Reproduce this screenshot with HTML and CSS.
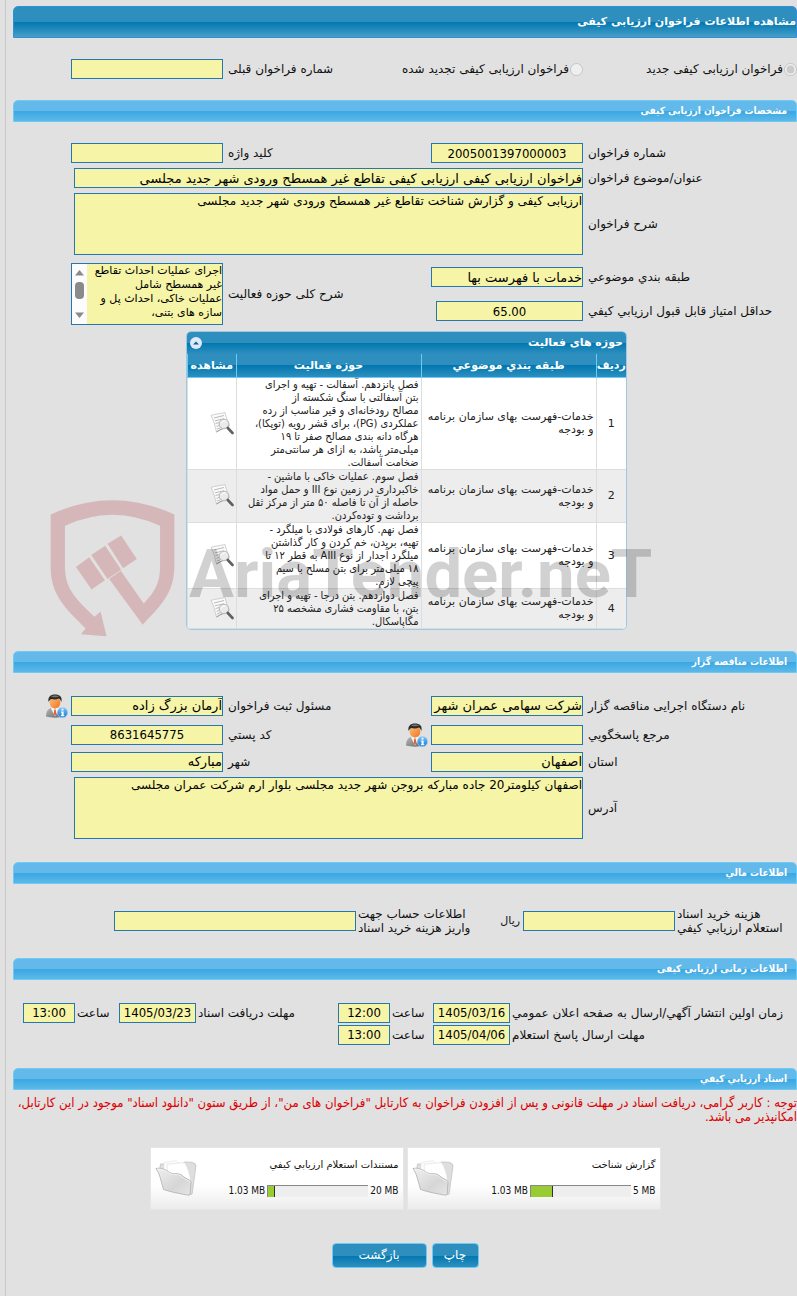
FILE: index.html
```
<!DOCTYPE html>
<html lang="fa" dir="rtl">
  <head>
    <meta charset="UTF-8" />
    <title>مشاهده اطلاعات فراخوان ارزیابی کیفی</title>
    <link rel="stylesheet" href="styles.css" />
  </head>
  <body>
    <!-- Shared icons -->
    <svg class="sprite" aria-hidden="true">
      <defs>
        <linearGradient id="gInfo" x1="0" y1="0" x2="0" y2="1">
          <stop offset="0" stop-color="#7cc6f5" />
          <stop offset="1" stop-color="#1877d4" />
        </linearGradient>
        <linearGradient id="gFace" x1="0" y1="0" x2="1" y2="1">
          <stop offset="0" stop-color="#ffc07a" />
          <stop offset="1" stop-color="#ee7422" />
        </linearGradient>
        <linearGradient id="gSuit" x1="0" y1="0" x2="1" y2="1">
          <stop offset="0" stop-color="#b9b9b9" />
          <stop offset="1" stop-color="#666" />
        </linearGradient>
        <linearGradient id="gFolder" x1="0" y1="0" x2="1" y2="1">
          <stop offset="0" stop-color="#f0f0f0" />
          <stop offset=".6" stop-color="#d6d6d6" />
          <stop offset="1" stop-color="#e6e6e6" />
        </linearGradient>
      </defs>
      <symbol id="icon-person" viewBox="0 0 22 24">
        <path d="M0 22.500c0-5 2-8 6-9h6c4 1 6 4 6 9-5 1.500-13 1.500-18 0z" fill="url(#gSuit)" />
        <path d="M6 13l3 1.500 3-1.500 1 1.500-4 8-4-8z" fill="#f5f5f5" />
        <path d="M8.300 15.500h1.400l.6 4.500-1.300 2-1.300-2z" fill="#e0603c" />
        <ellipse cx="9" cy="8.500" rx="5.400" ry="6" fill="url(#gFace)" />
        <path d="M2.600 8C1.500 3 4.500.5 9 .5s7.600 2 6.400 7.500c-.9-2-1.400-3-2.400-3.500-3 1.500-6 1-7.600.5-1.200.7-2.200 1.500-2.800 3z" fill="#2c2c2c" />
        <path d="M5 2.600c2-1.400 6-1.400 8 0-2 .8-6 .8-8 0z" fill="#777" />
        <circle cx="16.500" cy="18.500" r="5.200" fill="url(#gInfo)" stroke="#b7dcf7" stroke-width=".6" />
        <path d="M15.500 14.800h2v1.800h-2zM15 17.600h2.600v3.600h.8v1h-3.600v-1h.8v-2.600H15z" fill="#fff" />
      </symbol>
      <symbol id="icon-view" viewBox="0 0 24 23">
        <path d="M1 3.500C4 2 9 2 15 .5c1 5 3 9 4.500 13-4 2-8 3-13 6.500C5 14 4 9 1 3.500z" fill="#fafafa" stroke="#c4c4c4" stroke-width=".8" />
        <path d="M4 6l10-2.500M5 8.800l9-2M5.500 11.500l4-1M6.500 14.300l3-.8M7 17l4-1.500" stroke="#aaa" stroke-width=".8" />
        <path d="M6.500 20c4-3 9-4 12.500-6" stroke="#888" stroke-width=".8" fill="none" />
        <circle cx="14" cy="12" r="4.800" fill="#e8e8e8" fill-opacity=".9" stroke="#b8b8b8" />
        <path d="M11 11.500c.5-2 2.500-3 4.500-2.500" stroke="#fff" fill="none" />
        <path d="M17.800 16l4.700 5" stroke="#606060" stroke-width="2.600" stroke-linecap="round" />
      </symbol>
      <symbol id="icon-folder" viewBox="8 30 128 114">
        <path d="M22 60L25 44 90 46 97 38 121 39Q134 43 133 50L121 136 112 138 90 100z" fill="#dedede" stroke="#bbb" stroke-width="2" />
        <path d="M34 70L36 40 72 34 84 44 92 92 60 84z" fill="#fcfcfc" stroke="#ddd" stroke-width="1.500" />
        <path d="M46 72L45 45 98 40Q112 60 117 98L80 90z" fill="#fff" stroke="#d6d6d6" stroke-width="1.500" />
        <path d="M11 58C28 55 42 62 52 70C64 78 80 68 94 82C102 90 112 90 118 98L115 136Q114 141 107 139C82 134 56 130 34 122C26 98 24 75 11 58Z" fill="url(#gFolder)" stroke="#b0b0b0" stroke-width="2.500" />
        <path d="M14 60C30 58 42 66 53 73C66 80 80 72 92 85C100 92 110 93 116 100" fill="none" stroke="#fff" stroke-width="1.500" />
      </symbol>
    </svg>

    <main class="page">
      <h1 class="page-title">مشاهده اطلاعات فراخوان ارزیابی کیفی</h1>

      <form>
        <div class="grid type-row">
          <span class="option">
            <input type="radio" name="kind" id="kindNew" checked disabled />
            <label for="kindNew">فراخوان ارزیابی کیفی جدید</label>
          </span>
          <span class="option">
            <input type="radio" name="kind" id="kindRenewed" disabled />
            <label for="kindRenewed">فراخوان ارزیابی کیفی تجدید شده</label>
          </span>
          <label class="lbl" for="prevNo">شماره فراخوان قبلی</label>
          <input class="box" id="prevNo" type="text" readonly />
        </div>

        <h2 class="bar">مشخصات فراخوان ارزیابی کیفی</h2>
        <div class="grid fields">
          <label class="lbl" for="callNo">شماره فراخوان</label>
          <input class="box center" id="callNo" type="text" value="2005001397000003" readonly />
          <label class="lbl" for="keyword">کلید واژه</label>
          <input class="box" id="keyword" type="text" readonly />

          <label class="lbl first" for="subject">عنوان/موضوع فراخوان</label>
          <input class="box wide" id="subject" type="text" value="فراخوان ارزیابی کیفی ارزیابی کیفی تقاطع غیر همسطح ورودی شهر جدید مجلسی" readonly />

          <label class="lbl first" for="desc">شرح فراخوان</label>
          <textarea class="box wide" id="desc" readonly>ارزیابی کیفی و گزارش شناخت تقاطع غیر همسطح ورودی شهر جدید مجلسی</textarea>
        </div>
        <div class="grid category">
          <label class="lbl" for="cat">طبقه بندي موضوعي</label>
          <input class="box" id="cat" type="text" value="خدمات با فهرست بها" readonly />
          <label class="lbl scope-label" for="scope">شرح کلی حوزه فعالیت</label>
          <div class="scope">
            <textarea class="box" id="scope" readonly>اجرای عملیات احداث تقاطع
غیر همسطح شامل
عملیات خاکی، احداث پل و
سازه های بتنی،</textarea>
            <svg class="scroller" viewBox="0 0 15 60">
              <path d="M3 11.500L7.500 6l4.500 5.500zM3 48.500h9L7.500 54z" fill="#8a8a8a" />
              <rect x="3" y="18" width="9" height="17" rx="4" fill="#8a8a8a" />
            </svg>
          </div>
          <label class="lbl first" for="score">حداقل امتیاز قابل قبول ارزيابي كيفي</label>
          <input class="box center short" id="score" type="text" value="65.00" readonly />
        </div>

        <div class="activities">
          <div class="panel">
            <div class="panel-title">
              <span>حوزه های فعالیت</span>
              <button type="button" class="collapse" aria-label="بستن">
                <svg viewBox="0 0 12 12"><circle cx="6" cy="6" r="6" fill="#dfeaf8" /><path d="M3 7.500L6 4.500l3 3z" fill="#14628f" /></svg>
              </button>
            </div>
            <table>
              <thead>
                <tr>
                  <th class="c-row">ردیف</th>
                  <th class="c-cat">طبقه بندي موضوعي</th>
                  <th class="c-act">حوزه فعالیت</th>
                  <th class="c-view">مشاهده</th>
                </tr>
              </thead>
              <tbody>
                <tr>
                  <td class="num">1</td>
                  <td>خدمات-فهرست بهای سازمان برنامه<br />و بودجه</td>
                  <td class="act">فصل پانزدهم. آسفالت - تهیه و اجرای<br />بتن آسفالتی با سنگ شکسته از<br />مصالح رودخانه‌ای و قیر مناسب از رده<br />عملکردی (PG)، برای قشر رویه (توپکا)،<br />هرگاه دانه بندی مصالح صفر تا ۱۹<br />میلی‌متر باشد، به ازای هر سانتی‌متر<br />ضخامت آسفالت.</td>
                  <td class="view"><svg><use href="#icon-view" /></svg></td>
                </tr>
                <tr>
                  <td class="num">2</td>
                  <td>خدمات-فهرست بهای سازمان برنامه<br />و بودجه</td>
                  <td class="act">فصل سوم. عملیات خاکی با ماشین -<br />خاکبرداری در زمین نوع III و حمل مواد<br />حاصله از آن تا فاصله ۵۰ متر از مرکز ثقل<br />برداشت و توده‌کردن.</td>
                  <td class="view"><svg><use href="#icon-view" /></svg></td>
                </tr>
                <tr>
                  <td class="num">3</td>
                  <td>خدمات-فهرست بهای سازمان برنامه<br />و بودجه</td>
                  <td class="act">فصل نهم. کارهای فولادی با میلگرد -<br />تهیه، بریدن، خم کردن و کار گذاشتن<br />میلگرد آجدار از نوع AIII به قطر ۱۲ تا<br />۱۸ میلی‌متر برای بتن مسلح با سیم<br />پیچی لازم.</td>
                  <td class="view"><svg><use href="#icon-view" /></svg></td>
                </tr>
                <tr>
                  <td class="num">4</td>
                  <td>خدمات-فهرست بهای سازمان برنامه<br />و بودجه</td>
                  <td class="act">فصل دوازدهم. بتن درجا - تهیه و اجرای<br />بتن، با مقاومت فشاری مشخصه ۲۵<br />مگاپاسکال.</td>
                  <td class="view"><svg><use href="#icon-view" /></svg></td>
                </tr>
              </tbody>
            </table>
          </div>

          <div class="watermark" dir="ltr">
            <svg viewBox="149 58 376 414">
              <path d="M151 104Q337 18 523 104V260C523 345 475 385 428 436L327 298 362 273 431 372C465 335 480 310 480 262V138Q337 72 194 138V262C194 330 230 360 283 412L301 396 319 470 242 464 256 447C200 390 151 350 151 262Z" />
              <path d="M227 262l40-29 47 69-40 28zM273 226l42-28 48 72-41 28zM322 192l41-25 47 71-41 28z" />
            </svg>
            <span>AriaTender.neT</span>
          </div>
        </div>

        <h2 class="bar">اطلاعات مناقصه گزار</h2>
        <div class="grid fields organizer">
          <label class="lbl" for="org">نام دستگاه اجرایی مناقصه گزار</label>
          <input class="box" id="org" type="text" value="شرکت سهامی عمران شهر جدید مجلسی" readonly />
          <label class="lbl" for="owner">مسئول ثبت فراخوان</label>
          <input class="box" id="owner" type="text" value="آرمان بزرگ زاده" readonly />
          <svg class="person"><use href="#icon-person" /></svg>

          <label class="lbl" for="contact">مرجع پاسخگويي</label>
          <input class="box" id="contact" type="text" readonly />
          <span class="with-icon">
            <svg class="person"><use href="#icon-person" /></svg>
            <label class="lbl" for="postal">کد پستي</label>
          </span>
          <input class="box center" id="postal" type="text" value="8631645775" readonly />

          <label class="lbl first" for="province">استان</label>
          <input class="box" id="province" type="text" value="اصفهان" readonly />
          <label class="lbl" for="city">شهر</label>
          <input class="box" id="city" type="text" value="مبارکه" readonly />

          <label class="lbl first" for="address">آدرس</label>
          <textarea class="box wide" id="address" readonly>اصفهان کیلومتر20 جاده مبارکه بروجن شهر جدید مجلسی بلوار ارم شرکت عمران مجلسی</textarea>
        </div>

        <h2 class="bar">اطلاعات مالي</h2>
        <div class="grid finance">
          <label class="lbl near" for="fee">هزینه خرید اسناد<br />استعلام ارزيابي كيفي</label>
          <input class="box" id="fee" type="text" readonly />
          <span class="unit">ریال</span>
          <label class="lbl near" for="account">اطلاعات حساب جهت<br />واریز هزینه خرید اسناد</label>
          <input class="box" id="account" type="text" readonly />
        </div>

        <h2 class="bar">اطلاعات زمانی ارزیابی کیفی</h2>
        <div class="grid dates">
          <label class="lbl near" for="pubDate">زمان اولین انتشار آگهي/ارسال به صفحه اعلان عمومي</label>
          <input class="box center" id="pubDate" type="text" value="1405/03/16" readonly />
          <label class="lbl near" for="pubTime">ساعت</label>
          <input class="box center" id="pubTime" type="text" value="12:00" readonly />
          <label class="lbl near" for="docDate">مهلت دریافت اسناد</label>
          <input class="box center" id="docDate" type="text" value="1405/03/23" readonly />
          <label class="lbl near" for="docTime">ساعت</label>
          <input class="box center" id="docTime" type="text" value="13:00" readonly />

          <label class="lbl near first" for="replyDate">مهلت ارسال پاسخ استعلام</label>
          <input class="box center" id="replyDate" type="text" value="1405/04/06" readonly />
          <label class="lbl near" for="replyTime">ساعت</label>
          <input class="box center" id="replyTime" type="text" value="13:00" readonly />
        </div>

        <h2 class="bar">اسناد ارزيابي كيفي</h2>
        <p class="notice">توجه : کاربر گرامی، دریافت اسناد در مهلت قانونی و پس از افزودن فراخوان به کارتابل "فراخوان های من"، از طریق ستون "دانلود اسناد" موجود در این کارتابل،<br />امکانپذیر می باشد.</p>

        <div class="files">
          <div class="file">
            <div class="file-info">
              <span class="file-name">گزارش شناخت</span>
              <div class="usage">
                <span dir="ltr">5 MB</span>
                <div class="meter"><div class="used" style="width: 22%"></div></div>
                <span dir="ltr">1.03 MB</span>
              </div>
            </div>
            <svg class="folder"><use href="#icon-folder" /></svg>
          </div>
          <div class="file">
            <div class="file-info">
              <span class="file-name">مستندات استعلام ارزيابي كيفي</span>
              <div class="usage">
                <span dir="ltr">20 MB</span>
                <div class="meter"><div class="used" style="width: 7%"></div></div>
                <span dir="ltr">1.03 MB</span>
              </div>
            </div>
            <svg class="folder"><use href="#icon-folder" /></svg>
          </div>
        </div>

        <div class="actions">
          <button type="button" class="btn">چاپ</button>
          <button type="button" class="btn btn-back">بازگشت</button>
        </div>
      </form>
    </main>
  </body>
</html>
```
FILE: styles.css
```
* {
  box-sizing: border-box;
}
body {
  margin: 0;
  padding-left: 5px;
  background: #e1e1e1;
  color: #111;
  font-family: "DejaVu Sans", sans-serif;
  font-size: 12px;
  line-height: 14px;
}
.sprite {
  position: absolute;
  width: 0;
  height: 0;
}
.page {
  min-height: 100vh;
  padding: 6px 0 28px 7px;
  border-left: 1px solid #c8c8c8;
}

/* Title bars */
.page-title {
  display: flex;
  align-items: center;
  height: 32px;
  margin: 0;
  border: 1px solid #2f8fd8;
  border-radius: 5px 5px 0 0;
  background: linear-gradient(#2e8fbf 50%, #0077b0 50%, #479fc8);
  color: #fff;
  font-size: 11px;
}
.bar {
  display: flex;
  align-items: center;
  height: 22px;
  margin: 0;
  padding: 0 9px;
  border: 1px solid #6ccbf4;
  border-radius: 5px 5px 0 0;
  background: linear-gradient(#63baea 50%, #38a7e2 50%, #5eb8e9);
  color: #fff;
  font-family: "DejaVu Sans Condensed", sans-serif;
  font-size: 10px;
}

/* Form fields */
.grid {
  display: grid;
  grid-template-columns: 214fr 152fr 208fr 152fr 58fr;
  align-items: center;
}
.grid > * {
  min-width: 0;
}
.type-row {
  padding: 21px 0;
}
.option {
  display: flex;
  align-items: center;
  gap: 1px;
  white-space: nowrap;
}
.option input {
  width: 13px;
  height: 13px;
  margin: 0;
}
.fields {
  row-gap: 5px;
  padding: 21px 0 7px;
}
.organizer {
  padding-bottom: 23px;
}
.lbl {
  padding-left: 5px;
  text-align: left;
  white-space: nowrap;
}
.lbl.near {
  padding-left: 2px;
}
.first {
  grid-column: 1;
}
.box {
  width: 100%;
  height: 20px;
  margin: 0;
  padding: 0;
  border: 1px solid #2478ad;
  border-radius: 0;
  outline: none;
  background: #f6f4a6;
  color: #000;
  font-family: inherit;
  font-size: 13px;
}
.box.center {
  font-family: "DejaVu Sans Condensed", sans-serif;
  text-align: center;
}
.box.wide {
  grid-column: 2 / 5;
  width: calc(100% - 3px);
}
.box.short {
  width: calc(100% - 5px);
}
textarea.box {
  display: block;
  height: 62px;
  resize: none;
  overflow: hidden;
  font-size: 12px;
  line-height: 14px;
}
.category {
  grid-template-rows: 30px 30px;
  row-gap: 4px;
}
.scope-label {
  grid-area: 1 / 3 / 3 / 4;
}
.scope {
  display: flex;
  grid-area: 1 / 4 / 3 / 5;
  border: 1px solid #2478ad;
}
.scope textarea.box {
  flex: 1;
  min-width: 0;
  height: 60px;
  border: 0;
  font-size: 11px;
  line-height: 14px;
}
.scroller {
  width: 15px;
  height: 60px;
  background: #fcfcfc;
}
.person {
  display: block;
  flex: none;
  width: 22px;
  height: 24px;
  margin-right: 3px;
}
.with-icon {
  display: flex;
  align-items: center;
  justify-content: space-between;
}
.finance {
  grid-template-columns: 122fr 152fr 25fr 142fr 242fr 101fr;
  padding: 23px 0;
}
.unit {
  padding-right: 3px;
  font-size: 11px;
}
.dates {
  grid-template-columns: 287fr 77fr 43fr 52fr 142fr 77fr 44fr 52fr 10fr;
  row-gap: 2px;
  padding: 23px 0;
}

/* Activities table */
.activities {
  position: relative;
  padding: 5px 0 21px;
}
.panel {
  width: 441px;
  margin-right: 170px;
  border: 1px solid #9cc9e4;
  border-radius: 5px;
  overflow: hidden;
  background: #fff;
  font-size: 11px;
}
.panel-title {
  display: flex;
  align-items: center;
  justify-content: space-between;
  height: 22px;
  padding: 0 3px;
  background: linear-gradient(#2e8fbf 50%, #0077b0 50%, #2e8fbf);
  color: #fff;
  font-weight: bold;
}
.collapse {
  width: 12px;
  height: 12px;
  padding: 0;
  border: 0;
  background: none;
}
.collapse svg {
  display: block;
}
table {
  width: 100%;
  border-collapse: collapse;
  table-layout: fixed;
  line-height: 13px;
}
th {
  height: 23px;
  padding: 0;
  border-left: 1px solid #6ccbf4;
  border-bottom: 1px solid #6ccbf4;
  background: linear-gradient(#2e8fbf 50%, #0077b0 50%, #2e8fbf);
  color: #fff;
  white-space: nowrap;
}
.c-row {
  width: 30px;
}
.c-cat {
  width: 175px;
}
.c-act {
  width: 185px;
}
td {
  padding: 0 2px 0 0;
  border-left: 1px solid #ddd;
  border-bottom: 1px solid #ddd;
  color: #222;
  white-space: nowrap;
}
tr:nth-child(even) td {
  background: #ededed;
}
.num {
  padding: 0;
  text-align: center;
}
.act {
  font-family: "DejaVu Sans Condensed", sans-serif;
}
.view svg {
  display: block;
  width: 24px;
  height: 23px;
}
.watermark {
  position: absolute;
  top: 173px;
  left: 37px;
  display: flex;
  gap: 14px;
  pointer-events: none;
}
.watermark svg {
  width: 125px;
  height: 138px;
  fill: rgba(184, 60, 68, 0.25);
}
.watermark span {
  color: rgba(0, 0, 0, 0.18);
  font: bold 67px/150px Roboto, "Liberation Sans", sans-serif;
}

/* Documents */
.notice {
  margin: 0;
  padding: 6px 0 23px;
  color: #d00;
  font-family: "DejaVu Sans Condensed", sans-serif;
  font-size: 13px;
  white-space: nowrap;
}
.files {
  display: flex;
  justify-content: center;
  gap: 3px;
}
.file {
  display: flex;
  align-items: center;
  justify-content: space-between;
  width: 254px;
  height: 63px;
  padding: 0 4px;
  border: 1px solid #e6e6e6;
  background: linear-gradient(#fff 60%, #ececec);
  font-family: "DejaVu Sans Condensed", sans-serif;
  font-size: 10px;
}
.file-name {
  font-family: "DejaVu Sans", sans-serif;
}
.file-info {
  display: flex;
  flex-direction: column;
  gap: 12px;
}
.usage {
  display: flex;
  align-items: center;
  gap: 2px;
}
.meter {
  display: flex;
  justify-content: flex-end;
  width: 101px;
  height: 12px;
  border-top: 1px solid #888;
  border-left: 1px solid #888;
  background: #eee;
}
.used {
  border-right: 1px solid #333;
  background: #9c3;
}
.folder {
  width: 42px;
  height: 38px;
}
.actions {
  display: flex;
  justify-content: center;
  gap: 5px;
  padding-top: 33px;
}
.btn {
  min-width: 47px;
  height: 25px;
  padding: 0;
  border: 1px solid #6ccbf4;
  border-radius: 4px;
  background: linear-gradient(#2e8fbf 50%, #0077b0 50%, #2e8fbf);
  color: #fff;
  font-family: inherit;
  font-size: 12px;
}
.btn-back {
  min-width: 95px;
}
```
